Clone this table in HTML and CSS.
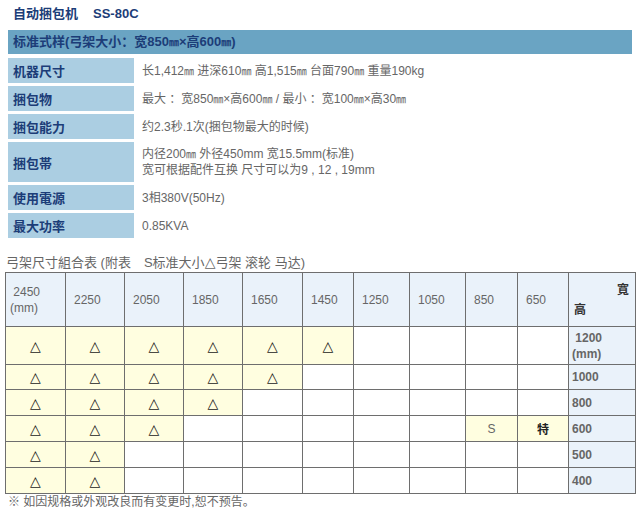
FILE: index.html
```html
<!DOCTYPE html>
<html lang="zh">
<head>
<meta charset="utf-8">
<title>自动捆包机 SS-80C</title>
<link rel="stylesheet" href="styles.css">
</head>
<body>
<h1 class="title"><span class="title-name">自动捆包机</span><span class="title-model">SS-80C</span></h1>

<div class="specs">
  <div class="spec-head">标准式样(弓架大小：宽850<span class="mm">㎜</span>×高600<span class="mm">㎜</span>)</div>
  <div class="spec-label">机器尺寸</div>
  <div class="spec-value"><span>长1,412<span class="mm">㎜</span> 进深610<span class="mm">㎜</span> 高1,515<span class="mm">㎜</span> 台面790<span class="mm">㎜</span> 重量190kg</span></div>
  <div class="spec-label">捆包物</div>
  <div class="spec-value"><span>最大 ：宽850<span class="mm">㎜</span>×高600<span class="mm">㎜</span> / 最小 ：宽100<span class="mm">㎜</span>×高30<span class="mm">㎜</span></span></div>
  <div class="spec-label">捆包能力</div>
  <div class="spec-value"><span>约2.3秒.1次(捆包物最大的时候)</span></div>
  <div class="spec-label">捆包帯</div>
  <div class="spec-value"><span>内径200<span class="mm">㎜</span> 外径450mm 宽15.5mm(标准)<br>宽可根据配件互换 尺寸可以为9 , 12 , 19mm</span></div>
  <div class="spec-label">使用電源</div>
  <div class="spec-value"><span>3相380V(50Hz)</span></div>
  <div class="spec-label">最大功率</div>
  <div class="spec-value"><span>0.85KVA</span></div>
</div>

<p class="caption">弓架尺寸組合表 (附表　S标准大小<span class="tri">△</span>弓架 滚轮 马达)</p>

<table class="grid">
  <colgroup>
    <col class="c60"><col class="c59"><col class="c59"><col class="c59"><col class="c60"><col class="c51"><col class="c56"><col class="c56"><col class="c52"><col class="c51"><col class="c67">
  </colgroup>
  <tr class="gh">
    <td>&nbsp;2450<br>(mm)</td><td>2250</td><td>2050</td><td>1850</td><td>1650</td><td>1450</td><td>1250</td><td>1050</td><td>850</td><td>650</td>
    <td class="corner"><div class="corner-in"><span class="w">寬</span><span class="h">高</span></div></td>
  </tr>
  <tr class="r1">
    <td class="y">△</td><td class="y">△</td><td class="y">△</td><td class="y">△</td><td class="y">△</td><td class="y">△</td><td></td><td></td><td></td><td></td><td class="rh">&nbsp;1200<br>(mm)</td>
  </tr>
  <tr class="r2">
    <td class="y">△</td><td class="y">△</td><td class="y">△</td><td class="y">△</td><td class="y">△</td><td></td><td></td><td></td><td></td><td></td><td class="rh">1000</td>
  </tr>
  <tr>
    <td class="y">△</td><td class="y">△</td><td class="y">△</td><td class="y">△</td><td></td><td></td><td></td><td></td><td></td><td></td><td class="rh">800</td>
  </tr>
  <tr>
    <td class="y">△</td><td class="y">△</td><td class="y">△</td><td></td><td></td><td></td><td></td><td></td><td class="y s">S</td><td class="y t">特</td><td class="rh">600</td>
  </tr>
  <tr>
    <td class="y">△</td><td class="y">△</td><td></td><td></td><td></td><td></td><td></td><td></td><td></td><td></td><td class="rh">500</td>
  </tr>
  <tr>
    <td class="y">△</td><td class="y">△</td><td></td><td></td><td></td><td></td><td></td><td></td><td></td><td></td><td class="rh">400</td>
  </tr>
</table>

<p class="note">※ 如因规格或外观改良而有变更时,恕不预告。</p>
</body>
</html>
```

FILE: styles.css
```css
html, body {
  margin: 0;
  padding: 0;
  background: #fff;
}
body {
  font-family: "Liberation Sans", "Noto Sans CJK SC", sans-serif;
  font-size: 12px;
  color: #666;
}
.mm {
  font-family: "Noto Sans CJK SC", sans-serif;
  font-size: 10px;
  line-height: 1;
  color: inherit;
}
.tri {
  font-family: "DejaVu Sans", sans-serif;
  font-size: 14px;
  line-height: 1;
}
.title {
  margin: 0;
  padding: 6px 0 0 13px;
  height: 24px;
  box-sizing: border-box;
  font-size: 13px;
  font-weight: bold;
  color: #1c3d78;
  line-height: 16px;
}
.title-model {
  margin-left: 15px;
  font-weight: bold;
}
.specs {
  margin: 6px 0 0 8px;
  width: 624px;
  display: grid;
  grid-template-columns: 126px 1fr;
  grid-template-rows: 25px 25px 25px 25px 40px 25px 25px;
  row-gap: 3px;
}
.spec-head {
  grid-column: 1 / 3;
  height: 24px;
  background: #6aa4c3;
  color: #1c3d78;
  font-weight: bold;
  font-size: 13px;
  line-height: 24px;
  padding-left: 5px;
}
.spec-label {
  background: #abcee2;
  color: #1c3d78;
  font-weight: bold;
  font-size: 13px;
  padding-left: 5px;
  display: flex;
  align-items: center;
}
.spec-value {
  padding-left: 8px;
  display: flex;
  align-items: center;
  line-height: 16px;
  color: #666;
}
.caption {
  margin: 17px 0 0 6px;
  height: 16px;
  font-size: 13px;
  line-height: 16px;
  color: #666;
}
.grid {
  margin: 1px 0 0 5px;
  border-collapse: collapse;
  table-layout: fixed;
  width: 630px;
}
.c60 { width: 60px; }
.c59 { width: 59px; }
.c51 { width: 51px; }
.c52 { width: 52px; }
.c56 { width: 56px; }
.c67 { width: 67px; }
.grid td {
  border: 1px solid #6e6e6e;
  height: 25px;
  padding: 0 4px;
  font-size: 12px;
  line-height: 16px;
  color: #666;
  vertical-align: middle;
  text-align: center;
}
.grid .gh td {
  height: 45px;
  background: #eaf2fa;
  text-align: left;
  padding-left: 8px;
}
.grid .gh td:first-child { padding-left: 4px; }
.grid .r1 td { height: 37px; }
.grid .r2 td { height: 24px; }
.grid td.y {
  background: #fffee0;
  color: #222;
  font-family: "DejaVu Sans", sans-serif;
  font-size: 14px;
}
.grid td.s { color: #666; font-family: "Liberation Sans", sans-serif; font-size: 12px; }
.grid td.t { font-weight: bold; color: #222; font-family: "Noto Sans CJK SC", sans-serif; font-size: 12px; }
.grid td.rh {
  background: #eaf2fa;
  text-align: left;
  font-weight: bold;
  color: #666;
  padding-left: 3px;
}
.grid .gh td.corner {
  padding: 4px 6px 4px 5px;
}
.corner-in {
  display: flex;
  flex-direction: column;
  gap: 4px;
}
.corner-in .w {
  align-self: flex-end;
  font-weight: bold;
  color: #333;
}
.corner-in .h {
  align-self: flex-start;
  font-weight: bold;
  color: #333;
}
.note {
  margin: 0 0 0 8px;
  font-size: 12px;
  line-height: 16px;
  color: #666;
}
```
